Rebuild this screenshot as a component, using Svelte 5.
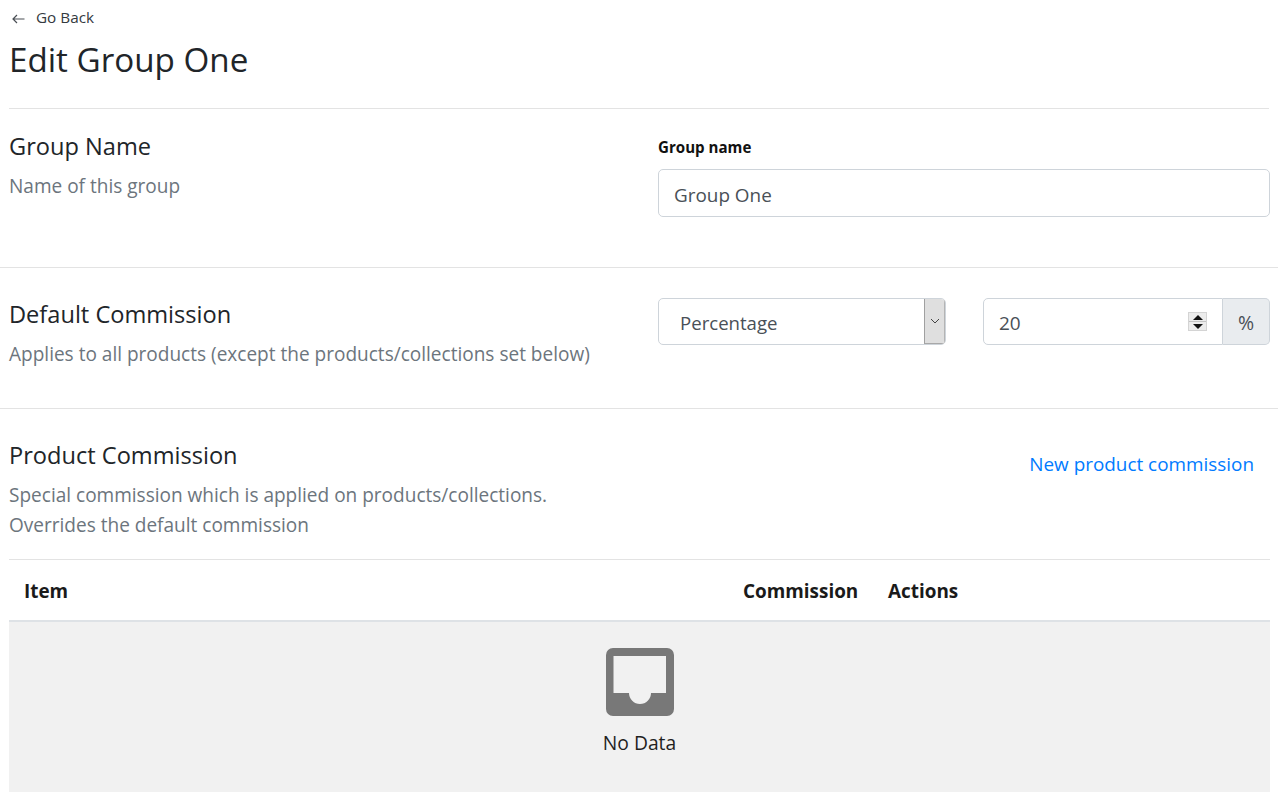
<script>
  const columns = [
    { label: 'Item', cls: 'c-item' },
    { label: 'Commission', cls: 'c-comm' },
    { label: 'Actions', cls: 'c-act' }
  ];
</script>

<div class="page">
  <header class="top">
    <a class="back" href="#back">
      <svg class="arrow" width="13" height="10" viewBox="0 0 13 10" aria-hidden="true"><path d="M12.500 5H1M5 1 1 5l4 4" fill="none" stroke="#4a4f55" stroke-width="1.2"/></svg>
      <span>Go Back</span>
    </a>
    <h1>Edit Group One</h1>
  </header>

  <section class="row first">
    <div class="info">
      <h2>Group Name</h2>
      <p>Name of this group</p>
    </div>
    <div class="controls">
      <label for="gn">Group name</label>
      <input id="gn" class="text" value="Group One" />
    </div>
  </section>

  <section class="row second">
    <div class="info">
      <h2>Default Commission</h2>
      <p>Applies to all products (except the products/collections set below)</p>
    </div>
    <div class="controls pair">
      <div class="select">
        <span class="sel-val">Percentage</span>
        <span class="sel-btn">
          <svg width="10" height="6" viewBox="0 0 10 6" aria-hidden="true"><path d="M1 1l4 4 4-4" fill="none" stroke="#444" stroke-width="1"/></svg>
        </span>
      </div>
      <div class="group">
        <div class="num">
          <span class="num-val">20</span>
          <span class="spin">
            <span class="up"><svg width="10" height="5" viewBox="0 0 10 5" aria-hidden="true"><path d="M5 0l5 5H0z" fill="#111"/></svg></span>
            <span class="dn"><svg width="10" height="5" viewBox="0 0 10 5" aria-hidden="true"><path d="M0 0h10L5 5z" fill="#111"/></svg></span>
          </span>
        </div>
        <span class="addon">%</span>
      </div>
    </div>
  </section>

  <section class="third">
    <div class="info">
      <h2>Product Commission</h2>
      <p>Special commission which is applied on products/collections.<br />Overrides the default commission</p>
    </div>
    <a class="new" href="#new">New product commission</a>
  </section>

  <div class="table">
    <div class="thead">
      {#each columns as c}
        <div class={c.cls}>{c.label}</div>
      {/each}
    </div>
    <div class="empty">
      <svg width="68" height="68" viewBox="0 0 68 68" aria-hidden="true">
        <path fill-rule="evenodd" fill="#787878" d="M7 0h54a7 7 0 0 1 7 7v54a7 7 0 0 1-7 7H7a7 7 0 0 1-7-7V7a7 7 0 0 1 7-7zM7.500 8v37h15.500a11 11 0 0 0 22 0h15V8z"/>
      </svg>
      <div class="nd">No Data</div>
    </div>
  </div>
</div>

<style>
  :global(body) {
    margin: 0;
    background: #fff;
    font-family: "Open Sans", "Noto Sans", sans-serif;
    color: #212529;
    overflow: hidden;
  }
  * { box-sizing: border-box; }
  .page { height: 798px; overflow: hidden; }
  .top { margin: 0 9px; height: 109px; border-bottom: 1px solid #e3e3e3; }
  .back {
    display: flex; align-items: center; gap: 11px;
    padding: 7px 0 0 3px; height: 27px;
    font-size: 15.3px; color: #343a40; text-decoration: none;
  }
  .arrow { margin-top: 3px; }
  h1 { margin: 6px 0 0; font-size: 33.2px; font-weight: 400; line-height: 54px; }
  .row { display: flex; padding: 0 8px 0 9px; border-bottom: 1px solid #e3e3e3; }
  .first { height: 159px; padding-top: 20px; }
  .second { height: 141px; padding-top: 29px; }
  .info { width: 649px; flex: none; }
  h2 { margin: 0; font-size: 23.6px; font-weight: 400; line-height: 34px; }
  p { margin: 8px 0 0; font-size: 19.05px; line-height: 30px; color: #6c757d; }
  .controls { width: 612px; margin-top: 1px; }
  label { display: block; font-size: 15.1px; font-weight: 700; color: #111; line-height: 20px; margin: 7px 0 12px; }
  .text {
    display: block; width: 100%; height: 48px; padding: 3px 15px 0;
    border: 1px solid #ced4da; border-radius: 5px;
    font: inherit; font-size: 18.9px; color: #495057; outline: none;
  }
  .pair { display: flex; justify-content: space-between; }
  .select {
    width: 288px; height: 47px; display: flex; align-items: center; justify-content: space-between;
    border: 1px solid #ced4da; border-radius: 5px; font-size: 18.6px; color: #495057; padding-left: 21px; overflow: hidden;
  }
  .sel-val { padding-top: 2px; }
  .sel-btn {
    width: 21px; height: 100%; background: #dfdfdf; border-left: 1px solid #a0a0a0; border-bottom: 1px solid #a8a8a8; border-right: 1px solid #b4b4b4;
    display: flex; align-items: center; justify-content: center;
  }
  .group { width: 287px; height: 47px; display: flex; }
  .num {
    flex: 1; display: flex; align-items: center; justify-content: space-between;
    border: 1px solid #ced4da; border-radius: 5px 0 0 5px; padding: 0 15px; font-size: 19px; color: #495057;
  }
  .num-val { padding-top: 2px; }
  .spin { width: 19px; height: 19px; display: flex; flex-direction: column; background: #c4c4c4; gap: 1px; border: 1px solid #d4d4d4; }
  .up, .dn { flex: 1; display: flex; align-items: center; justify-content: center; background: #ececec; }
  .up svg, .dn svg { width: 10px; height: 5px; }
  .addon {
    width: 47px; display: flex; align-items: center; justify-content: center;
    background: #e9ecef; border: 1px solid #ced4da; border-left: 0; border-radius: 0 5px 5px 0;
    padding-top: 1px; font-size: 19.5px; color: #495057;
  }
  .third { display: flex; justify-content: space-between; padding: 29px 24px 0 9px; height: 150px; }
  .new { font-size: 18.9px; color: #007bff; text-decoration: none; line-height: 30px; margin-top: 11px; }
  .table { margin: 0 8px 0 9px; }
  .thead {
    height: 63px; display: flex; align-items: center; padding-top: 2px; border-top: 1px solid #e3e3e3; border-bottom: 2px solid #dee2e6;
    font-size: 18.9px; font-weight: 700; color: #1a1a1a;
  }
  .c-item { width: 734px; padding-left: 15px; }
  .c-comm { width: 145px; }
  .empty { height: 170px; background: #f1f1f1; display: flex; flex-direction: column; align-items: center; padding-top: 26px; }
  .nd { margin-top: 12px; font-size: 19.3px; line-height: 30px; color: #1f1f1f; }
</style>
